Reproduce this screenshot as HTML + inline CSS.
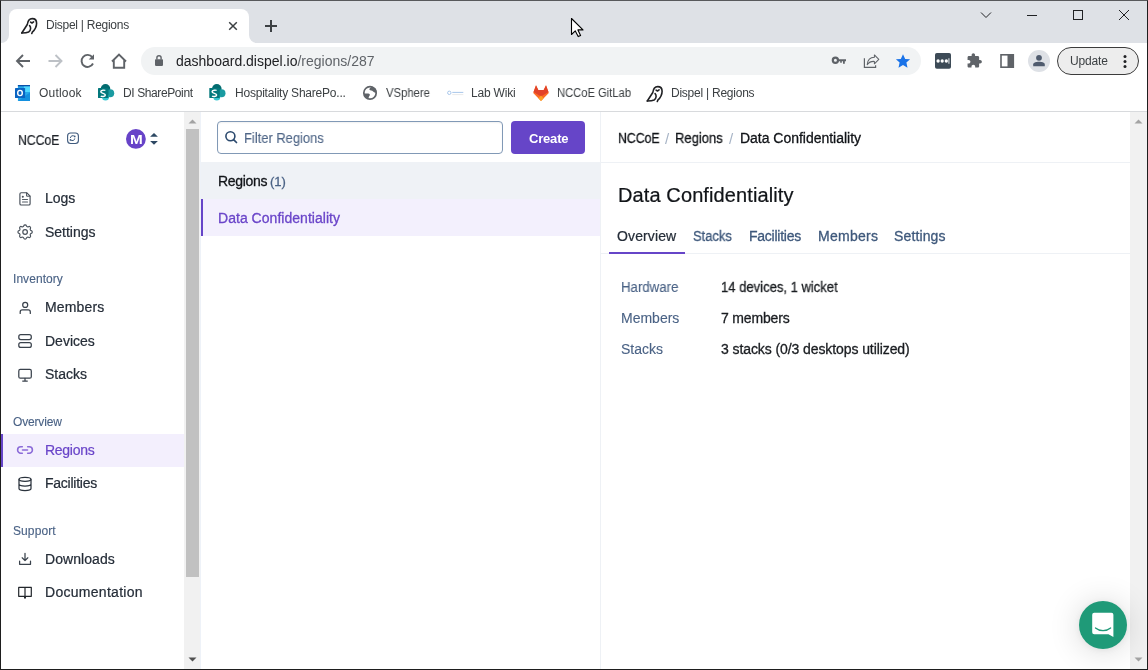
<!DOCTYPE html>
<html><head><meta charset="utf-8">
<style>
*{box-sizing:border-box;margin:0;padding:0}
html,body{width:1148px;height:670px;overflow:hidden;background:#fff}
body{position:relative;font-family:"Liberation Sans",sans-serif;color:#1f2933}
.a{position:absolute}
.t{position:absolute;white-space:nowrap;line-height:1;z-index:5;will-change:transform}
</style></head><body>
<div class="a" style="left:0;top:0;width:1148px;height:670px;border:1px solid #1e1e1e;border-top-color:#58595c;z-index:50"></div>
<div class="a" style="left:0;top:0;width:1148px;height:43px;background:#dee1e6"></div>
<div class="a" style="left:9px;top:9px;width:240px;height:34px;background:#fff;border-radius:8px 8px 0 0"></div>
<div class="a" style="left:1px;top:35px;width:8px;height:8px;background:#fff"></div>
<div class="a" style="left:1px;top:35px;width:8px;height:8px;background:#dee1e6;border-radius:0 0 8px 0"></div>
<div class="a" style="left:249px;top:35px;width:8px;height:8px;background:#fff"></div>
<div class="a" style="left:249px;top:35px;width:8px;height:8px;background:#dee1e6;border-radius:0 0 0 8px"></div>
<div class="a" style="left:0;top:43px;width:1148px;height:68px;background:#fff"></div>
<div class="a" style="left:141px;top:47px;width:780px;height:28px;background:#f1f3f4;border-radius:14px"></div>
<div class="a" style="left:1057px;top:47px;width:82px;height:28px;border:1px solid #3c3c3c;border-radius:14px;background:#ededed"></div>
<div class="a" style="left:0;top:111px;width:1148px;height:1px;background:#d8dadd"></div>

<div class="a" style="left:1px;top:434px;width:183px;height:33px;background:#f3effd"></div>
<div class="a" style="left:1px;top:434px;width:2px;height:33px;background:#6645c8"></div>

<div class="a" style="left:184px;top:112px;width:16px;height:557px;background:#f1f1f1"></div><div class="a" style="left:200px;top:112px;width:1px;height:557px;background:#eef2f8"></div>
<div class="a" style="left:186px;top:129px;width:13px;height:448px;background:#c1c1c1"></div>

<div class="a" style="left:217px;top:121px;width:286px;height:33px;border:1px solid #8199b6;border-radius:4px;background:#fff;box-shadow:inset 0 1px 2px rgba(0,0,0,.06)"></div>
<div class="a" style="left:511px;top:121px;width:74px;height:33px;border-radius:4px;background:#6645c8"></div>
<div class="a" style="left:201px;top:162px;width:399px;height:37px;background:#eff2f6"></div>
<div class="a" style="left:201px;top:199px;width:399px;height:37px;background:#f3f0fd"></div>
<div class="a" style="left:201px;top:199px;width:2px;height:37px;background:#6645c8"></div>
<div class="a" style="left:600px;top:112px;width:1px;height:557px;background:#eef1f5"></div>

<div class="a" style="left:601px;top:162px;width:529px;height:1px;background:#eef1f5"></div>
<div class="a" style="left:601px;top:253px;width:529px;height:1px;background:#eef1f5"></div>
<div class="a" style="left:609px;top:252px;width:76px;height:2px;background:#6645c8"></div>

<div class="a" style="left:1130px;top:112px;width:17px;height:557px;background:#f1f1f1"></div>

<div class="a" style="left:1079px;top:601px;width:48px;height:48px;border-radius:50%;background:#1f9a78;box-shadow:0 1px 6px rgba(0,0,0,.06),0 2px 32px rgba(0,0,0,.16)"></div>

<svg class="a" style="left:0;top:0;z-index:10" width="1148" height="670" viewBox="0 0 1148 670" fill="none">
<!-- tab owl -->
<g stroke="#202124" stroke-width="1.6" stroke-linecap="round" stroke-linejoin="round">
<path d="M21.8 33 L27.3 24.5 C27.8 20.5 29.3 18.6 32.2 18.6 C35 18.6 36.6 20.6 36.6 23.2 C36.6 27 34.6 30 32.3 32.2 L31.8 33.5"/>
<path d="M29.6 25.6 C31 27 31.2 30.5 28.6 32 C26.6 33 24 33 21.8 33"/>
<path d="M30.6 22.1 L32 23 L33.6 21.9"/>
</g>
<!-- tab close -->
<path d="M229.2 22.2 L236.8 29.8 M236.8 22.2 L229.2 29.8" stroke="#3c4043" stroke-width="1.5"/>
<!-- new tab -->
<path d="M271 20 V32 M265 26 H277" stroke="#3c4043" stroke-width="2"/>
<!-- window controls -->
<path d="M981 12.5 L986 17.5 L991 12.5" stroke="#202124" stroke-width="1"/>
<path d="M1027 15.5 H1037" stroke="#202124" stroke-width="1"/>
<rect x="1073.5" y="10.5" width="9" height="9" stroke="#202124" stroke-width="1"/>
<path d="M1119 10 L1129 20 M1129 10 L1119 20" stroke="#202124" stroke-width="1"/>
<!-- nav -->
<path d="M30 61 H17.5 M23 55 L17 61 L23 67" stroke="#5f6368" stroke-width="1.9" />
<path d="M48.5 61 H61 M55.5 55 L61.5 61 L55.5 67" stroke="#bdc1c6" stroke-width="1.9" />
<path d="M92.3 57.2 A6 6 0 1 0 93 63.5" stroke="#5f6368" stroke-width="1.9"/>
<path d="M94 54.3 V59.6 H88.7 Z" fill="#5f6368"/>
<path d="M112 61.5 L119 54.5 L126 61.5 M113.8 60 V67.8 H124.2 V60" stroke="#5f6368" stroke-width="1.9"/>
<!-- lock -->
<rect x="155" y="59.2" width="8" height="6.7" rx="0.8" fill="#5f6368"/>
<path d="M156.9 59.5 V57.8 A2.1 2.1 0 0 1 161.1 57.8 V59.5" stroke="#5f6368" stroke-width="1.4"/>
<!-- key -->
<circle cx="835.4" cy="60.3" r="2.6" stroke="#5f6368" stroke-width="2.2"/>
<path d="M837.5 59.3 H846 V61.3 H844.8 V63.8 H843 V61.3 H841.8 V62.8 H840.2 V61.3 H837.5 Z" fill="#5f6368"/>
<!-- share -->
<path d="M864.4 58.2 V67.4 H875.6 V65.2" stroke="#5f6368" stroke-width="1.2"/>
<path d="M867.2 64.6 C867.6 60.2 870 57.4 874.4 57.3 V54.9 L878.8 59.4 L874.4 63.8 V61.4 C871.2 61.2 868.8 62.4 867.2 64.6 Z" stroke="#5f6368" stroke-width="1.05" stroke-linejoin="round"/>
<!-- star -->
<path d="M903 54.3 L905.2 58.9 L910.1 59.3 L906.4 62.6 L907.5 67.7 L903 65 L898.5 67.7 L899.6 62.6 L895.9 59.3 L900.8 58.9 Z" fill="#1a73e8"/>
<!-- ext square -->
<rect x="935" y="53" width="16" height="15.7" rx="1.8" fill="#3d4b57"/>
<circle cx="938.1" cy="61" r="1.65" fill="#fff"/><circle cx="942.2" cy="61" r="1.65" fill="#fff"/><circle cx="946.3" cy="61" r="1.65" fill="#fff"/>
<path d="M948.9 58.2 V63.8" stroke="#c4cace" stroke-width="1.3"/>
<!-- puzzle -->
<path transform="translate(966.2 52.6) scale(0.68)" d="M20.5 11H19V7c0-1.1-.9-2-2-2h-4V3.5C13 2.12 11.88 1 10.5 1S8 2.12 8 3.5V5H4c-1.1 0-1.99.9-1.99 2v3.8H3.5c1.49 0 2.7 1.21 2.7 2.7s-1.21 2.7-2.7 2.7H2V20c0 1.1.9 2 2 2h3.8v-1.5c0-1.49 1.21-2.7 2.7-2.7 1.49 0 2.7 1.21 2.7 2.7V22H17c1.1 0 2-.9 2-2v-4h1.5c1.38 0 2.5-1.12 2.5-2.5S21.88 11 20.5 11z" fill="#5f6368"/>
<!-- sidebar -->
<rect x="1001" y="54.8" width="12.3" height="12.4" stroke="#5f6368" stroke-width="1.6"/>
<rect x="1007.5" y="54" width="6.5" height="14" fill="#5f6368"/>
<!-- profile -->
<circle cx="1039" cy="61" r="11" fill="#dee1e6"/>
<circle cx="1039" cy="57.8" r="2.9" fill="#4f5b6e"/>
<path d="M1033.2 66.3 V64.6 C1033.2 62.6 1036 61.8 1039 61.8 C1042 61.8 1044.8 62.6 1044.8 64.6 V66.3 Z" fill="#4f5b6e"/>
<!-- update dots -->
<circle cx="1125" cy="56.6" r="1.5" fill="#202124"/><circle cx="1125" cy="61.5" r="1.5" fill="#202124"/><circle cx="1125" cy="66.4" r="1.5" fill="#202124"/>

<!-- bookmarks: outlook -->
<rect x="17.9" y="85" width="12.1" height="16" fill="#28a8ea"/>
<rect x="23.9" y="86" width="6.1" height="6" fill="#50d9ff"/>
<rect x="17.9" y="85" width="12.1" height="1.3" fill="#0a4fa8"/>
<path d="M18 101 L30 101 L30 92.5 Z" fill="#1490df"/>
<rect x="15" y="88" width="10.1" height="10" rx="0.6" fill="#0a64c2"/>
<ellipse cx="20" cy="93" rx="2.3" ry="2.6" stroke="#fff" stroke-width="1.4"/>
<!-- sharepoint x2 -->
<g id="sp">
<circle cx="105.5" cy="88.8" r="4.8" fill="#036c70"/>
<circle cx="110.2" cy="93.2" r="4" fill="#1a9ba1"/>
<circle cx="105.5" cy="97" r="3.5" fill="#37c6d0"/>
<rect x="98" y="88" width="10.5" height="10" rx="0.6" fill="#03787c"/>
<path d="M105.3 90.5 C104.8 90 100.8 89.8 100.8 91.8 C100.8 93.8 105.3 93 105.3 95 C105.3 97 101.5 96.7 100.8 96" stroke="#fff" stroke-width="1.5"/>
</g>
<use href="#sp" transform="translate(111.3 0)"/>
<!-- globe -->
<circle cx="370" cy="92.9" r="6.2" fill="#fff" stroke="#5f6368" stroke-width="1.7"/>
<path d="M369.3 89.6 C369.3 88.4 370.6 87.4 372 87.1 L375.2 88.1 C376.2 89.4 376.7 91 376.7 92.4 C375.4 93.1 373.9 92.7 373.1 91.6 C372.1 90.3 370.4 90.9 369.3 89.6 Z" fill="#5f6368"/>
<path d="M363.8 93.4 H368.3 C369.5 93.4 370.3 94.4 369.7 95.5 C369.1 96.3 368.6 97 368.6 98.6 C366.4 98 364.6 96.1 363.8 93.4 Z" fill="#5f6368"/>
<!-- lab wiki -->
<circle cx="449.3" cy="92.8" r="1.7" stroke="#a8c6ea" stroke-width="1"/>
<path d="M452.3 92.4 H463.3" stroke="#a8c6ea" stroke-width="1"/>
<path d="M452.3 94.6 H463.3" stroke="#e3e3e3" stroke-width="0.8"/>
<!-- gitlab -->
<path d="M533.2 93 L536 85.2 L538.3 90 H543.7 L546 85.2 L548.8 93 L541 101 Z" fill="#fc6d26"/>
<path d="M533.5 91.9 L536 85.2 L538.3 90 H543.7 L546 85.2 L548.5 91.9 L541 96.6 Z" fill="#e24329"/>
<path d="M541 95.6 L543.6 98.4 L541 101 L538.4 98.4 Z" fill="#fca326"/>
<!-- bookmark owl -->
<g stroke="#202124" stroke-width="1.6" stroke-linecap="round" stroke-linejoin="round" transform="translate(625.5 68)">
<path d="M21.8 33 L27.3 24.5 C27.8 20.5 29.3 18.6 32.2 18.6 C35 18.6 36.6 20.6 36.6 23.2 C36.6 27 34.6 30 32.3 32.2 L31.8 33.5"/>
<path d="M29.6 25.6 C31 27 31.2 30.5 28.6 32 C26.6 33 24 33 21.8 33"/>
<path d="M30.6 22.1 L32 23 L33.6 21.9"/>
</g>

<!-- sidebar header -->
<rect x="67.6" y="133" width="10.8" height="10.5" rx="3" stroke="#3f5a7d" stroke-width="1.1"/>
<path d="M74.6 136.5 A2.4 2.4 0 0 0 70.4 138 M70.6 139.8 A2.4 2.4 0 0 0 74.8 138.4" stroke="#3f5a7d" stroke-width="1"/>
<circle cx="74.7" cy="136.4" r="0.9" fill="#3f5a7d"/><circle cx="70.5" cy="139.9" r="0.9" fill="#3f5a7d"/>
<circle cx="135.9" cy="138.9" r="9.9" fill="#6743c8"/>
<path d="M150.1 136.7 L154 133 L157.9 136.7 Z M150.1 140.9 L154 144.7 L157.9 140.9 Z" fill="#2d4863"/>

<!-- nav icons -->
<g stroke="#474f59" stroke-width="1.15" stroke-linejoin="round" stroke-linecap="round">
<path d="M21.2 192.7 H26.6 L30.1 196.2 V203.7 A1.3 1.3 0 0 1 28.8 205 H21.2 A1.3 1.3 0 0 1 19.9 203.7 V194 A1.3 1.3 0 0 1 21.2 192.7 Z"/>
<path d="M26.6 192.9 V196.2 H29.9" stroke-width="1"/>
<path d="M22.5 199.5 H27.5 M22.5 202 H27.5" stroke="#555d66"/>
<circle cx="22.8" cy="196.7" r="0.45" fill="#333b45"/>
</g>
<g stroke="#4a525c" stroke-width="1.2" stroke-linejoin="round">
<path transform="translate(15.5 222.4) scale(0.8)" d="M10.325 4.317c.426-1.756 2.924-1.756 3.35 0a1.724 1.724 0 002.573 1.066c1.543-.94 3.31.826 2.37 2.37a1.724 1.724 0 001.065 2.572c1.756.426 1.756 2.924 0 3.35a1.724 1.724 0 00-1.066 2.573c.94 1.543-.826 3.31-2.37 2.37a1.724 1.724 0 00-2.572 1.065c-.426 1.756-2.924 1.756-3.35 0a1.724 1.724 0 00-2.573-1.066c-1.543.94-3.31-.826-2.37-2.37a1.724 1.724 0 00-1.065-2.572c-1.756-.426-1.756-2.924 0-3.35a1.724 1.724 0 001.066-2.573c-.94-1.543.826-3.31 2.37-2.37.996.608 2.296.07 2.572-1.065z" stroke-width="1.45"/>
<circle cx="25.1" cy="232" r="2.3"/>
</g>
<g stroke="#3a424c" stroke-width="1.25" stroke-linecap="round" stroke-linejoin="round">
<circle cx="25.2" cy="304.9" r="2.5"/>
<path d="M20.2 313.4 V312 C20.2 310.6 21 309.9 22.2 309.9 H28.3 C29.5 309.9 30.3 310.6 30.3 312 V313.4"/>
<rect x="18.8" y="334.7" width="12.5" height="4.9" rx="2"/>
<rect x="18.8" y="342.5" width="12.5" height="4.9" rx="2"/>
<rect x="18.8" y="369.4" width="12.5" height="8.8" rx="1.5"/>
<path d="M25 378.3 V380.8 M22.7 381 H27.3"/>
</g>
<g stroke="#8a6ad8" stroke-width="1.6" stroke-linecap="round">
<path d="M22.3 446.8 H20.8 A3.2 3.2 0 0 0 20.8 453.2 H22.3 M27.7 446.8 H29.2 A3.2 3.2 0 0 1 29.2 453.2 H27.7 M22.5 450 H27.5"/>
</g>
<g stroke="#2b333d" stroke-width="1.25">
<ellipse cx="25" cy="479.3" rx="6" ry="2"/>
<path d="M19 479.3 V488.6 C19 489.7 21.7 490.6 25 490.6 C28.3 490.6 31 489.7 31 488.6 V479.3 M19 484 C19 485.1 21.7 486 25 486 C28.3 486 31 485.1 31 484"/>
</g>
<g stroke="#3a424c" stroke-width="1.25" stroke-linecap="round" stroke-linejoin="round">
<path d="M25 553.3 V560.5 M22.2 557.8 L25 560.6 L27.8 557.8 M19.6 561.2 V564.3 H30.5 V561.2"/>
</g>
<g stroke="#22262b" stroke-width="1.2" stroke-linejoin="round">
<path d="M18.7 587.4 H25 V596.3 H18.7 Z M25 587.4 H31.3 V596.3 H25 Z"/>
<path d="M25 596 V598.5" stroke-width="2"/>
</g>

<!-- search -->
<circle cx="230.4" cy="136.3" r="4.5" stroke="#2c4a6e" stroke-width="1.6"/>
<path d="M233.6 139.6 L236.5 142.5" stroke="#2c4a6e" stroke-width="1.7" stroke-linecap="round"/>

<!-- scrollbar arrows -->
<path d="M188.5 123.5 L192.5 119.5 L196.5 123.5 Z" fill="#a3a3a3"/>
<path d="M188.5 657.5 L192.5 661.5 L196.5 657.5 Z" fill="#505050"/>
<path d="M1134.5 123.5 L1138.5 119.5 L1142.5 123.5 Z" fill="#a3a3a3"/>
<path d="M1134.5 657.5 L1138.5 661.5 L1142.5 657.5 Z" fill="#a3a3a3"/>

<!-- cursor -->
<path d="M571.5 18.5 V34.5 L575.3 30.9 L578.2 36.6 L580.6 35.5 L577.9 29.9 H583 Z" fill="#fff" stroke="#000" stroke-width="1.1" stroke-linejoin="round"/>
<!-- chat -->
<path d="M1094.2 612.7 H1111.4 A2 2 0 0 1 1113.4 614.7 V637 L1108.5 634.3 H1094.2 A2 2 0 0 1 1092.2 632.3 V614.7 A2 2 0 0 1 1094.2 612.7 Z" fill="#fff"/>
<path d="M1095.5 628 C1099.5 631.5 1106.5 631.5 1110.6 628" stroke="#1f9a78" stroke-width="1.3" stroke-linecap="round"/>
</svg>

<div class="t" style="left:130.2px;top:133.2px;font-size:13px;font-weight:700;color:#fff;z-index:12;transform:scaleX(1.18);transform-origin:0 0">M</div>
<div class="t" style="left:45.50px;top:19.44px;font-size:12px;color:#3c4043;letter-spacing:-0.265px;">Dispel | Regions</div>
<div class="t" style="left:175.50px;top:53.95px;font-size:14px;color:#202124;letter-spacing:0.001px;">dashboard.dispel.io<span style="color:#5f6368">/regions/287</span></div>
<div class="t" style="left:39.00px;top:86.84px;font-size:12px;color:#3c4043;letter-spacing:0.19px;">Outlook</div>
<div class="t" style="left:123.00px;top:86.84px;font-size:12px;color:#3c4043;letter-spacing:-0.393px;">DI SharePoint</div>
<div class="t" style="left:234.50px;top:86.84px;font-size:12px;color:#3c4043;letter-spacing:-0.214px;">Hospitality SharePo...</div>
<div class="t" style="left:386.20px;top:86.84px;font-size:12px;color:#3c4043;transform:scaleX(0.94);transform-origin:0 0;">VSphere</div>
<div class="t" style="left:471.20px;top:86.84px;font-size:12px;color:#3c4043;letter-spacing:-0.202px;">Lab Wiki</div>
<div class="t" style="left:557.00px;top:86.84px;font-size:12px;color:#3c4043;transform:scaleX(0.9323);transform-origin:0 0;">NCCoE GitLab</div>
<div class="t" style="left:671.20px;top:86.84px;font-size:12px;color:#3c4043;letter-spacing:-0.238px;">Dispel | Regions</div>
<div class="t" style="left:1070.00px;top:55.34px;font-size:12px;color:#3c4043;letter-spacing:-0.141px;">Update</div>
<div class="t" style="left:17.90px;top:133.05px;font-size:14px;color:#1f2329;-webkit-text-stroke:0.22px #1f2329;transform:scaleX(0.8743);transform-origin:0 0;">NCCoE</div>
<div class="t" style="left:44.50px;top:191.15px;font-size:14px;color:#252d38;-webkit-text-stroke:0.22px #252d38;">Logs</div>
<div class="t" style="left:44.50px;top:225.15px;font-size:14px;color:#252d38;letter-spacing:-0.013px;-webkit-text-stroke:0.22px #252d38;">Settings</div>
<div class="t" style="left:13.20px;top:272.84px;font-size:12px;color:#4a6285;letter-spacing:0.055px;-webkit-text-stroke:0.12px #4a6285;">Inventory</div>
<div class="t" style="left:44.70px;top:300.15px;font-size:14px;color:#252d38;letter-spacing:0.157px;-webkit-text-stroke:0.22px #252d38;">Members</div>
<div class="t" style="left:44.70px;top:333.75px;font-size:14px;color:#252d38;-webkit-text-stroke:0.22px #252d38;">Devices</div>
<div class="t" style="left:44.70px;top:366.75px;font-size:14px;color:#252d38;-webkit-text-stroke:0.22px #252d38;">Stacks</div>
<div class="t" style="left:13.20px;top:415.54px;font-size:12px;color:#4a6285;letter-spacing:-0.174px;-webkit-text-stroke:0.12px #4a6285;">Overview</div>
<div class="t" style="left:44.70px;top:442.85px;font-size:14px;color:#6a45c9;letter-spacing:-0.279px;-webkit-text-stroke:0.22px #6a45c9;">Regions</div>
<div class="t" style="left:44.70px;top:475.95px;font-size:14px;color:#252d38;letter-spacing:-0.241px;-webkit-text-stroke:0.22px #252d38;">Facilities</div>
<div class="t" style="left:13.20px;top:524.74px;font-size:12px;color:#4a6285;letter-spacing:0.095px;-webkit-text-stroke:0.12px #4a6285;">Support</div>
<div class="t" style="left:44.70px;top:552.05px;font-size:14px;color:#252d38;letter-spacing:0.067px;-webkit-text-stroke:0.22px #252d38;">Downloads</div>
<div class="t" style="left:44.70px;top:585.15px;font-size:14px;color:#252d38;letter-spacing:0.286px;-webkit-text-stroke:0.22px #252d38;">Documentation</div>
<div class="t" style="left:243.70px;top:131.15px;font-size:14px;color:#4f6687;-webkit-text-stroke:0.12px #4f6687;transform:scaleX(0.9239);transform-origin:0 0;">Filter Regions</div>
<div class="t" style="left:528.50px;top:131.80px;font-size:13px;color:#ffffff;font-weight:700;letter-spacing:-0.194px;">Create</div>
<div class="t" style="left:217.60px;top:173.95px;font-size:14px;color:#111418;letter-spacing:-0.329px;-webkit-text-stroke:0.3px #111418;">Regions</div>
<div class="t" style="left:270.00px;top:174.80px;font-size:13px;color:#4a6285;-webkit-text-stroke:0.3px #4a6285;">(1)</div>
<div class="t" style="left:217.60px;top:210.85px;font-size:14px;color:#6a45c9;letter-spacing:0.031px;-webkit-text-stroke:0.3px #6a45c9;">Data Confidentiality</div>
<div class="t" style="left:617.50px;top:131.15px;font-size:14px;color:#111418;-webkit-text-stroke:0.3px #111418;transform:scaleX(0.8785);transform-origin:0 0;">NCCoE</div>
<div class="t" style="left:665.00px;top:131.30px;font-size:15px;color:#a7b4c6;">/</div>
<div class="t" style="left:675.00px;top:131.15px;font-size:14px;color:#111418;-webkit-text-stroke:0.3px #111418;transform:scaleX(0.9304);transform-origin:0 0;">Regions</div>
<div class="t" style="left:729.00px;top:131.30px;font-size:15px;color:#a7b4c6;">/</div>
<div class="t" style="left:739.70px;top:131.15px;font-size:14px;color:#111418;letter-spacing:-0.021px;-webkit-text-stroke:0.3px #111418;">Data Confidentiality</div>
<div class="t" style="left:617.50px;top:185.07px;font-size:20px;color:#111418;letter-spacing:0.109px;-webkit-text-stroke:0.22px #111418;">Data Confidentiality</div>
<div class="t" style="left:617.20px;top:229.05px;font-size:14px;color:#252d38;letter-spacing:0.12px;-webkit-text-stroke:0.22px #252d38;">Overview</div>
<div class="t" style="left:693.00px;top:229.05px;font-size:14px;color:#3e587b;-webkit-text-stroke:0.3px #3e587b;transform:scaleX(0.9235);transform-origin:0 0;">Stacks</div>
<div class="t" style="left:748.70px;top:229.05px;font-size:14px;color:#3e587b;letter-spacing:-0.241px;-webkit-text-stroke:0.3px #3e587b;">Facilities</div>
<div class="t" style="left:818.00px;top:229.05px;font-size:14px;color:#3e587b;letter-spacing:0.273px;-webkit-text-stroke:0.3px #3e587b;">Members</div>
<div class="t" style="left:894.00px;top:229.05px;font-size:14px;color:#3e587b;letter-spacing:0.129px;-webkit-text-stroke:0.3px #3e587b;">Settings</div>
<div class="t" style="left:620.60px;top:280.15px;font-size:14px;color:#4a6285;-webkit-text-stroke:0.12px #4a6285;transform:scaleX(0.9456);transform-origin:0 0;">Hardware</div>
<div class="t" style="left:620.60px;top:311.35px;font-size:14px;color:#4a6285;-webkit-text-stroke:0.12px #4a6285;">Members</div>
<div class="t" style="left:620.60px;top:341.85px;font-size:14px;color:#4a6285;-webkit-text-stroke:0.12px #4a6285;">Stacks</div>
<div class="t" style="left:721.30px;top:280.15px;font-size:14px;color:#1a1d21;-webkit-text-stroke:0.3px #1a1d21;transform:scaleX(0.9314);transform-origin:0 0;">14 devices, 1 wicket</div>
<div class="t" style="left:721.30px;top:311.35px;font-size:14px;color:#1a1d21;letter-spacing:-0.166px;-webkit-text-stroke:0.3px #1a1d21;">7 members</div>
<div class="t" style="left:721.30px;top:341.85px;font-size:14px;color:#1a1d21;letter-spacing:-0.088px;-webkit-text-stroke:0.3px #1a1d21;">3 stacks (0/3 desktops utilized)</div>
</body></html>
